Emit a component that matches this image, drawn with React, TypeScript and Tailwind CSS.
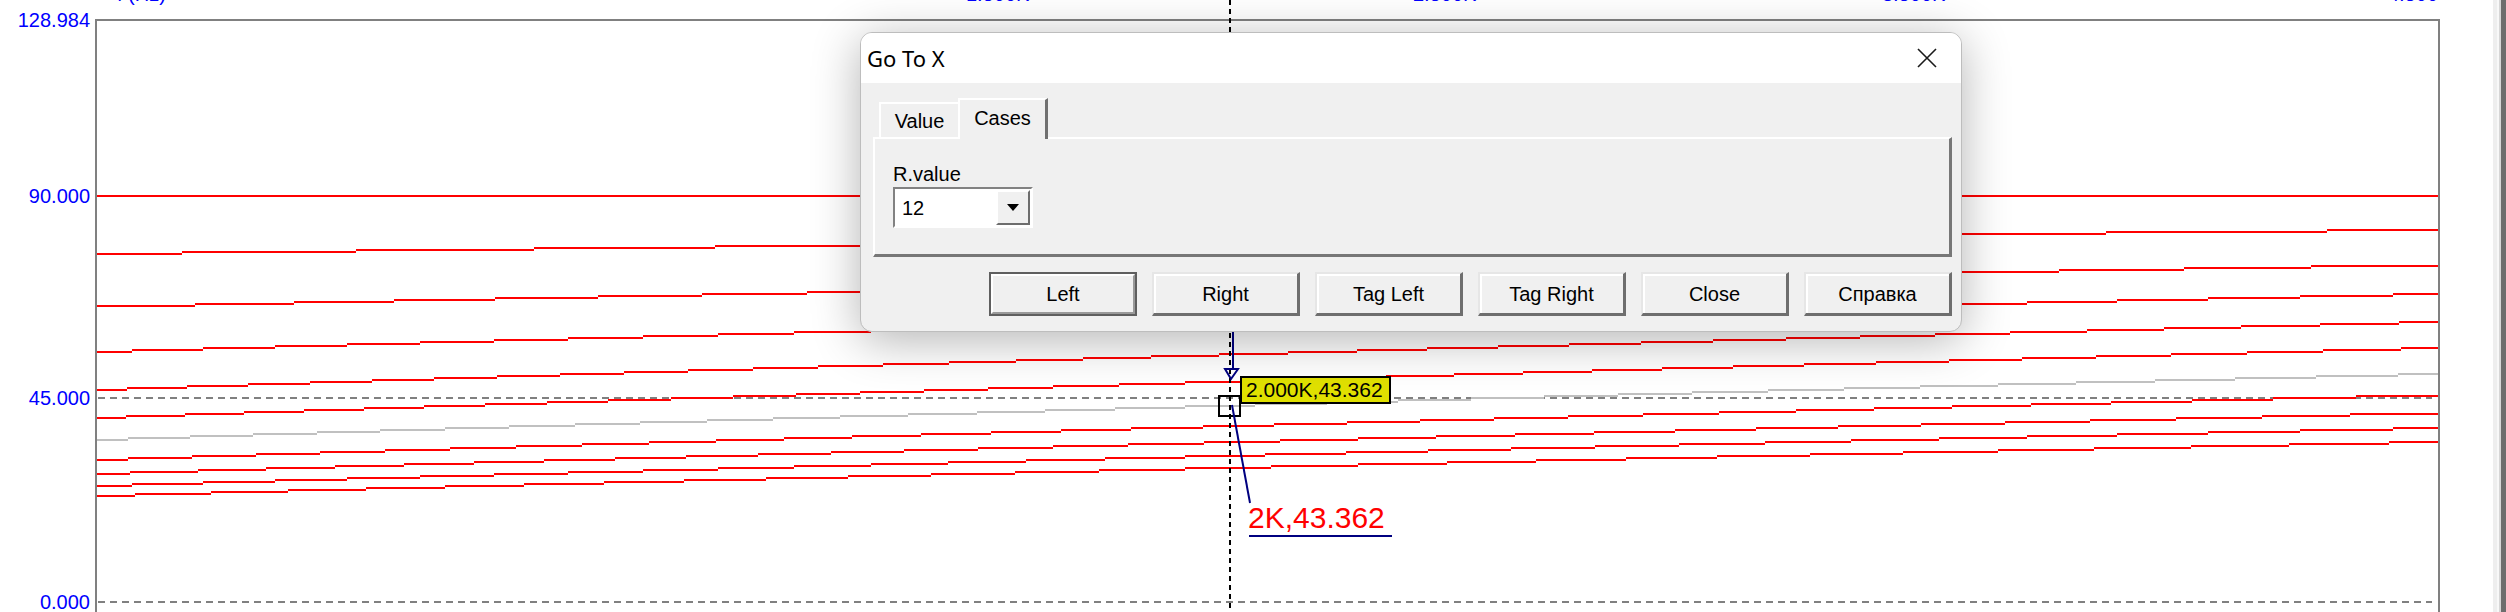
import React from "react";

const PLOT_L = 96;
const PLOT_R = 2439;
const PLOT_T = 20;
const PLOT_W = PLOT_R - PLOT_L;

// y0 = pixel row at the left edge, rise = pixels gained by the right edge
const CURVES: { y0: number; rise: number; color: string }[] = [
  { y0: 196, rise: 0, color: "#ff0000" },
  { y0: 254, rise: 24, color: "#ff0000" },
  { y0: 307, rise: 42, color: "#ff0000" },
  { y0: 352, rise: 58, color: "#ff0000" },
  { y0: 390, rise: 68, color: "#ff0000" },
  { y0: 418, rise: 70, color: "#ff0000" },
  { y0: 440, rise: 66, color: "#c0c0c0" },
  { y0: 460, rise: 65, color: "#ff0000" },
  { y0: 474, rise: 61, color: "#ff0000" },
  { y0: 486, rise: 58, color: "#ff0000" },
  { y0: 496, rise: 54, color: "#ff0000" },
];

const Y_LABELS = [
  { text: "128.984", y: 20 },
  { text: "90.000", y: 196 },
  { text: "45.000", y: 398 },
  { text: "0.000", y: 602 },
];

const X_LABELS = [
  { text: "f (Hz)", x: 117 },
  { text: "1.500K", x: 966 },
  { text: "2.500K", x: 1413 },
  { text: "3.500K", x: 1882 },
  { text: "4.500", x: 2388 },
];

const BUTTONS = ["Left", "Right", "Tag Left", "Tag Right", "Close", "Справка"];

function stepPath(y0: number, rise: number) {
  let d = "";
  let prev: number | null = null;
  let startX = PLOT_L + 1;
  for (let x = PLOT_L + 1; x <= PLOT_R; x++) {
    const t = (x - PLOT_L) / PLOT_W;
    const y = y0 - (rise * (t - 0.125 * t * t)) / 0.875;
    const yq = Math.round(y / 2) * 2;
    if (prev === null) {
      prev = yq;
      startX = x;
    } else if (yq !== prev) {
      d += `M${startX} ${prev}H${x}`;
      prev = yq;
      startX = x;
    }
  }
  d += `M${startX} ${prev}H${PLOT_R}`;
  return d;
}

function Chart() {
  return (
    <svg className="absolute left-0 top-0" width={2493} height={612} shapeRendering="crispEdges">
      {/* grid */}
      {[196, 398, 602].map((y) => (
        <line key={y} x1={PLOT_L + 2} x2={2432} y1={y} y2={y} stroke="#808080" strokeWidth={2} strokeDasharray="7 5" />
      ))}
      {/* curves */}
      {CURVES.map((c, i) => (
        <path key={i} d={stepPath(c.y0, c.rise)} stroke={c.color} strokeWidth={2} fill="none" />
      ))}
      {/* frame */}
      <path d={`M${PLOT_L} 612V${PLOT_T}H${PLOT_R}V612`} stroke="#808080" strokeWidth={2} fill="none" />
      {/* cursor */}
      <line x1={1230} x2={1230} y1={0} y2={612} stroke="#000000" strokeWidth={2} strokeDasharray="5 4" />
      {/* marker + leader */}
      <line x1={1233} x2={1233} y1={330} y2={369} stroke="#000080" strokeWidth={2} />
      <path d="M1225 369H1238L1231 379Z" stroke="#000080" strokeWidth={2} fill="none" shapeRendering="auto" />
      <rect x={1219} y={396} width={21} height={20} stroke="#000000" strokeWidth={2} fill="none" />
      <line x1={1232} y1={405} x2={1250} y2={503} stroke="#000080" strokeWidth={2} shapeRendering="auto" />
      <line x1={1249} x2={1392} y1={536} y2={536} stroke="#000080" strokeWidth={2} />
    </svg>
  );
}

function Win95Button({ label, isDefault }: { label: string; isDefault?: boolean }) {
  if (isDefault) {
    return (
      <div className="w-[148px] h-[44px] border-2 border-[#5f5f5f]">
        <div className="h-full flex items-center justify-center border-t-2 border-l-2 border-white border-b-2 border-r-2 border-b-[#9a9a9a] border-r-[#9a9a9a] bg-[#f0f0f0]">
          {label}
        </div>
      </div>
    );
  }
  return (
    <div className="w-[148px] h-[44px] flex items-center justify-center bg-[#f0f0f0] border-t-2 border-l-2 border-t-[#e6e6e6] border-l-[#e6e6e6] border-b-[3px] border-r-[3px] border-b-[#6e6e6e] border-r-[#6e6e6e] shadow-[inset_2px_2px_0_#ffffff]">
      {label}
    </div>
  );
}

function GoToDialog() {
  return (
    <div
      className="absolute left-[860px] top-[32px] w-[1102px] h-[300px] rounded-[12px] border border-[#bdbdbd] bg-[#f0f0f0] overflow-hidden shadow-[0_8px_48px_rgba(0,0,0,0.3)]"
      style={{ fontFamily: '"Liberation Sans", Arial, sans-serif' }}
    >
      {/* Title bar */}
      <div className="h-[50px] bg-white flex items-center justify-between pl-[6px] pr-[23px]">
        <span className="text-[22px] text-black" style={{ fontFamily: '"Noto Sans", "Open Sans", sans-serif' }}>
          Go To X
        </span>
        <svg width="22" height="22" viewBox="0 0 22 22">
          <path d="M2 2L20 20M20 2L2 20" stroke="#1a1a1a" strokeWidth="1.6" fill="none" />
        </svg>
      </div>

      {/* Body */}
      <div className="pl-[12px] pr-[9px] pt-[15px] text-[20px] leading-[20px] text-black">
        <div className="relative z-10 h-[39px] flex items-end pl-[6px]">
          <div className="w-[79px] h-[35px] flex items-center justify-center bg-[#f0f0f0] border-t-2 border-l-2 border-white">
            Value
          </div>
          <div className="w-[90px] h-[41px] -mb-[2px] flex items-start justify-center pt-[8px] bg-[#f0f0f0] border-t-2 border-l-2 border-white border-r-[3px] border-r-[#707070]">
            Cases
          </div>
        </div>

        <div className="h-[120px] border-t-2 border-l-2 border-white border-b-[3px] border-r-[3px] border-b-[#777777] border-r-[#777777] pl-[18px] pt-[25px]">
          <div className="h-[20px]">R.value</div>
          <div className="mt-[3px] w-[140px] h-[41px] border-t-2 border-l-2 border-t-[#828282] border-l-[#828282] border-b-2 border-r-2 border-white bg-white flex items-center">
            <span className="flex-1 pl-[7px]">12</span>
            <div className="w-[34px] h-[35px] mr-[1px] flex items-center justify-center bg-[#f0f0f0] border-t-2 border-l-2 border-white border-b-2 border-r-2 border-b-[#6d6d6d] border-r-[#6d6d6d]">
              <svg width="12" height="7" viewBox="0 0 12 7">
                <path d="M0 0H12L6 7Z" fill="#000000" />
              </svg>
            </div>
          </div>
        </div>

        <div className="mt-[15px] flex justify-end gap-[15px]">
          {BUTTONS.map((b, i) => (
            <Win95Button key={b} label={b} isDefault={i === 0} />
          ))}
        </div>
      </div>
    </div>
  );
}

export default function App() {
  return (
    <div className="w-[2506px] h-[612px] flex overflow-hidden bg-white">
      <div
        className="relative w-[2493px] h-[612px] bg-white overflow-hidden"
        style={{ fontFamily: '"Liberation Sans", Arial, sans-serif' }}
      >
        <Chart />

        {/* top axis labels, clipped by the window edge */}
        {X_LABELS.map((l) => (
          <span
            key={l.text}
            className="absolute top-[-16px] text-[20px] leading-[20px] text-[#0000ff] whitespace-nowrap"
            style={{ left: l.x }}
          >
            {l.text}
          </span>
        ))}

        {/* y axis labels */}
        {Y_LABELS.map((l) => (
          <span
            key={l.text}
            className="absolute right-[2403px] text-[20px] leading-[20px] text-[#0000ff] whitespace-nowrap"
            style={{ top: l.y - 10 }}
          >
            {l.text}
          </span>
        ))}

        {/* cursor readout */}
        <div className="absolute left-[1240px] top-[376px] w-[151px] h-[28px] border-2 border-black bg-[#e0e000] text-[21px] leading-[24px] text-black pl-[4px] whitespace-nowrap">
          2.000K,43.362
        </div>
        <span className="absolute left-[1248px] top-[502px] text-[30px] leading-[32px] text-[#ff0000] whitespace-nowrap">
          2K,43.362
        </span>

        <GoToDialog />
      </div>

      {/* window edge */}
      <div className="w-[4px] h-full bg-[#eeeeee]" />
      <div className="w-[2px] h-full bg-[#f8f8f8]" />
      <div className="w-[2px] h-full bg-[#d6d6d6]" />
      <div className="w-[5px] h-full bg-[#6d6d6d]" />
    </div>
  );
}
